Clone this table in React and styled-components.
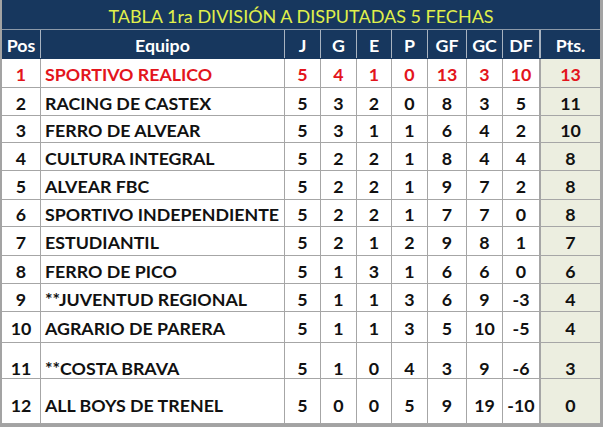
import styled, { createGlobalStyle } from 'styled-components'

const GlobalStyle = createGlobalStyle`
  body {
    margin: 0;
    background: #ffffff;
    font-family: Lato, "Liberation Sans", sans-serif;
  }
`

const COLS = '39px 244px 36px 36px 35px 36px 39px 36px 37px 60px'

const rows = [
  { pos: 1, team: 'SPORTIVO REALICO', j: 5, g: 4, e: 1, p: 0, gf: 13, gc: 3, df: 10, pts: 13, h: 29, leader: true },
  { pos: 2, team: 'RACING DE CASTEX', j: 5, g: 3, e: 2, p: 0, gf: 8, gc: 3, df: 5, pts: 11, h: 28 },
  { pos: 3, team: 'FERRO DE ALVEAR', j: 5, g: 3, e: 1, p: 1, gf: 6, gc: 4, df: 2, pts: 10, h: 27 },
  { pos: 4, team: 'CULTURA INTEGRAL', j: 5, g: 2, e: 2, p: 1, gf: 8, gc: 4, df: 4, pts: 8, h: 28 },
  { pos: 5, team: 'ALVEAR FBC', j: 5, g: 2, e: 2, p: 1, gf: 9, gc: 7, df: 2, pts: 8, h: 29 },
  { pos: 6, team: 'SPORTIVO INDEPENDIENTE', j: 5, g: 2, e: 2, p: 1, gf: 7, gc: 7, df: 0, pts: 8, h: 27 },
  { pos: 7, team: 'ESTUDIANTIL', j: 5, g: 2, e: 1, p: 2, gf: 9, gc: 8, df: 1, pts: 7, h: 29 },
  { pos: 8, team: 'FERRO DE PICO', j: 5, g: 1, e: 3, p: 1, gf: 6, gc: 6, df: 0, pts: 6, h: 28 },
  { pos: 9, team: '**JUVENTUD REGIONAL', j: 5, g: 1, e: 1, p: 3, gf: 6, gc: 9, df: -3, pts: 4, h: 28 },
  { pos: 10, team: 'AGRARIO DE PARERA', j: 5, g: 1, e: 1, p: 3, gf: 5, gc: 10, df: -5, pts: 4, h: 31 },
  { pos: 11, team: '**COSTA BRAVA', j: 5, g: 1, e: 0, p: 4, gf: 3, gc: 9, df: -6, pts: 3, h: 36, shift: 14 },
  { pos: 12, team: 'ALL BOYS DE TRENEL', j: 5, g: 0, e: 0, p: 5, gf: 9, gc: 19, df: -10, pts: 0, h: 45, shift: 7 },
]

const Board = styled.div`
  width: 598px;
  border-left: 2px solid #a3a3a3;
  border-right: 3px solid #a3a3a3;
  border-bottom: 3px solid #a3a3a3;
  background: #ffffff;
`

const Title = styled.div`
  height: 30px;
  background: #17375e;
  border-bottom: 1px solid #8c99a8;
  color: #e0f04a;
  font-size: 18px;
  display: flex;
  align-items: center;
  justify-content: center;
  padding-top: 2px;
  box-sizing: border-box;
`

const Row = styled.div`
  display: grid;
  grid-template-columns: ${COLS};
  height: ${({ $h }) => $h}px;
  box-sizing: border-box;
  border-bottom: 1px solid ${({ $head }) => ($head ? '#17375e' : '#a6a6a6')};
  background: ${({ $head }) => ($head ? '#17375e' : '#ffffff')};
  color: ${({ $head, $leader }) => ($head ? '#ffffff' : $leader ? '#e3151c' : '#111111')};
  font-weight: 700;
  font-size: 17.8px;
`

const Cell = styled.div`
  display: flex;
  align-items: center;
  justify-content: ${({ $left }) => ($left ? 'flex-start' : 'center')};
  padding-left: ${({ $left }) => ($left ? '4px' : '0')};
  padding-top: ${({ $shift }) => $shift || 2}px;
  box-sizing: border-box;
  border-right: 1px solid ${({ $head }) => ($head ? '#a8b3c0' : '#a6a6a6')};
  white-space: nowrap;
  overflow: hidden;
`

const PtsCell = styled(Cell)`
  border-right: none;
  border-left: 2px solid ${({ $head }) => ($head ? '#a8b3c0' : '#a6a6a6')};
  background: ${({ $head }) => ($head ? '#17375e' : '#eceee0')};
  margin-left: -1px;
`

const heads = ['Pos', 'Equipo', 'J', 'G', 'E', 'P', 'GF', 'GC', 'DF']

export default function App() {
  return (
    <>
      <GlobalStyle />
      <Board>
        <Title>TABLA 1ra DIVISIÓN A DISPUTADAS 5 FECHAS</Title>
        <Row $head $h={29}>
          {heads.map((h) => (
            <Cell key={h} $head>{h}</Cell>
          ))}
          <PtsCell $head>Pts.</PtsCell>
        </Row>
        {rows.map((r) => (
          <Row key={r.pos} $h={r.h} $leader={r.leader}>
            <Cell $shift={r.shift}>{r.pos}</Cell>
            <Cell $left $shift={r.shift}>{r.team}</Cell>
            {[r.j, r.g, r.e, r.p, r.gf, r.gc, r.df].map((v, i) => (
              <Cell key={i} $shift={r.shift}>{v}</Cell>
            ))}
            <PtsCell $shift={r.shift}>{r.pts}</PtsCell>
          </Row>
        ))}
      </Board>
    </>
  )
}
